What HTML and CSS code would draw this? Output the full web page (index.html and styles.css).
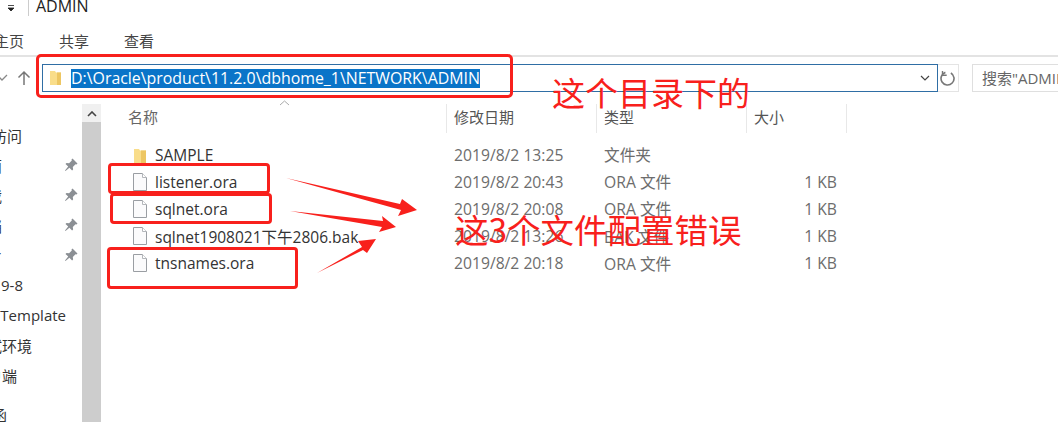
FILE: index.html
```html
<!DOCTYPE html>
<html lang="zh">
<head>
<meta charset="utf-8">
<title>ADMIN</title>
<link rel="stylesheet" href="styles.css">
</head>
<body>
<div class="window">
  <header class="titlebar">
    <svg class="qa-arrow" width="8" height="6" viewBox="0 0 8 6"><path d="M1 0.500h6M1 3h6L4 6z" fill="#222" stroke="#222" stroke-width="0.8"/></svg>
    <span class="title-sep"></span>
    <span class="title">ADMIN</span>
  </header>
  <nav class="tabs">
    <span class="tab tab-home">主页</span>
    <span class="tab">共享</span>
    <span class="tab">查看</span>
  </nav>
  <div class="addressrow">
    <div class="navbtns">
      <svg width="10" height="8" viewBox="0 0 10 8" class="nav-chev"><path d="M-3 1l5 5 5-5" fill="none" stroke="#888" stroke-width="1.3"/></svg>
      <svg width="14" height="16" viewBox="0 0 14 16" class="nav-up"><path d="M7 15V2M1.500 7.500L7 2l5.500 5.500" fill="none" stroke="#777" stroke-width="1.500"/></svg>
    </div>
    <div class="address">
      <svg class="addr-folder" width="13" height="16" viewBox="0 0 13 16"><path d="M1 1h5l1 1.500h5V15H1z" fill="#f9dd8a"/><path d="M8 2.500h4V15H8z" fill="#edc662"/></svg>
      <span class="path">D:\Oracle\product\11.2.0\dbhome_1\NETWORK\ADMIN</span>
      <svg class="addr-chev" width="10" height="6" viewBox="0 0 10 6"><path d="M1 1l4 4 4-4" fill="none" stroke="#444" stroke-width="1.200"/></svg>
    </div>
    <div class="refresh">
      <svg width="16" height="17" viewBox="0 0 16 17"><path d="M4.500 2.800A6.500 6.500 0 1 0 10 2.600" fill="none" stroke="#777" stroke-width="1.600" transform="rotate(8 8 9)"/><path d="M2.500 1v4.200h4.200" fill="none" stroke="#777" stroke-width="1.400"/></svg>
    </div>
    <div class="search">搜索"ADMIN"</div>
  </div>
  <div class="main">
    <aside class="sidebar">
      <ul class="navlist">
        <li class="nav-item"><span class="nav-label">快速访问</span></li>
        <li class="nav-item"><span class="nav-label">桌面</span><svg class="pin" viewBox="0 0 14 14"><use href="#pin"/></svg></li>
        <li class="nav-item"><span class="nav-label">下载</span><svg class="pin" viewBox="0 0 14 14"><use href="#pin"/></svg></li>
        <li class="nav-item"><span class="nav-label">文档</span><svg class="pin" viewBox="0 0 14 14"><use href="#pin"/></svg></li>
        <li class="nav-item"><span class="nav-label">图片</span><svg class="pin" viewBox="0 0 14 14"><use href="#pin"/></svg></li>
        <li class="nav-item"><span class="nav-label">2019-8</span></li>
        <li class="nav-item"><span class="nav-label">Template</span></li>
        <li class="nav-item"><span class="nav-label">测试环境</span></li>
        <li class="nav-item"><span class="nav-label">客户端</span></li>
        <li class="nav-item nav-last"><span class="nav-label">网络函</span></li>
      </ul>
    </aside>
    <div class="scrollbar">
      <svg class="scroll-up" width="10" height="6" viewBox="0 0 10 6"><path d="M1 5l4-4 4 4" fill="none" stroke="#444" stroke-width="1.600"/></svg>
    </div>
    <section class="files">
      <div class="head">
        <svg class="sort" width="11" height="6" viewBox="0 0 11 6"><path d="M1 5l4.500-4L10 5" fill="none" stroke="#aaa" stroke-width="1"/></svg>
        <div class="h h-name">名称</div>
        <div class="h h-date">修改日期</div>
        <div class="h h-type">类型</div>
        <div class="h h-size">大小</div>
      </div>
      <div class="row">
        <div class="c-name"><svg class="ic" width="16" height="18" viewBox="0 0 16 18"><path d="M2 3h5l1 1.500h6V17H2z" fill="#f9dd8a"/><path d="M9 4.500h5V17H9z" fill="#edc662"/></svg>SAMPLE</div>
        <div class="c-date">2019/8/2 13:25</div><div class="c-type">文件夹</div><div class="c-size"></div>
      </div>
      <div class="row">
        <div class="c-name"><svg class="ic" width="16" height="18" viewBox="0 0 16 18"><use href="#doc"/></svg>listener.ora</div>
        <div class="c-date">2019/8/2 20:43</div><div class="c-type">ORA 文件</div><div class="c-size">1 KB</div>
      </div>
      <div class="row">
        <div class="c-name"><svg class="ic" width="16" height="18" viewBox="0 0 16 18"><use href="#doc"/></svg>sqlnet.ora</div>
        <div class="c-date">2019/8/2 20:08</div><div class="c-type">ORA 文件</div><div class="c-size">1 KB</div>
      </div>
      <div class="row">
        <div class="c-name"><svg class="ic" width="16" height="18" viewBox="0 0 16 18"><use href="#doc"/></svg>sqlnet1908021下午2806.bak</div>
        <div class="c-date">2019/8/2 13:26</div><div class="c-type">BAK 文件</div><div class="c-size">1 KB</div>
      </div>
      <div class="row">
        <div class="c-name"><svg class="ic" width="16" height="18" viewBox="0 0 16 18"><use href="#doc"/></svg>tnsnames.ora</div>
        <div class="c-date">2019/8/2 20:18</div><div class="c-type">ORA 文件</div><div class="c-size">1 KB</div>
      </div>
    </section>
  </div>

  <div class="mark mark-addr"></div>
  <div class="mark mark-1"></div>
  <div class="mark mark-2"></div>
  <div class="mark mark-3"></div>
  <div class="note note-dir">这个目录下的</div>
  <div class="note note-err">这3个文件配置错误</div>
  <svg class="arrows" width="1058" height="422" viewBox="0 0 1058 422">
    <path d="M286 178L400 204L402 199L417 210L398 216L401 210z" fill="#f8201c"/>
    <path d="M290 211L383 221L382 216L396 227L379 232L382 227z" fill="#f8201c"/>
    <path d="M317 273L362 247L358 241L376 239L367 253L363 250z" fill="#f8201c"/>
  </svg>
</div>

<svg width="0" height="0" class="defs">
  <defs>
    <symbol id="pin" viewBox="0 0 14 14"><path d="M8.500 0.500l5 5-1 1-1-.3-2.700 2.700.3 2.600-1 1-2.700-2.700L1.500 13 1 12.500l3.200-3.900L1.500 5.900l1-1 2.600.3 2.700-2.700-.3-1z" fill="#8b8f94"/></symbol>
    <symbol id="doc" viewBox="0 0 16 18"><path d="M1.500 0.500h9l4 4v13h-13z" fill="#fbfbfc" stroke="#9a9ea3"/><path d="M10.500 0.500v4h4" fill="#fff" stroke="#b4b7bb"/></symbol>
  </defs>
</svg>
</body>
</html>
```

FILE: styles.css
```css
* { box-sizing: border-box; }
html, body { margin: 0; padding: 0; background: #fff; }
body { width: 1058px; height: 422px; overflow: hidden; font-family: "Liberation Sans", "Noto Sans CJK SC", sans-serif; }
ul { list-style: none; margin: 0; padding: 0; }
.defs { display: block; height: 0; position: absolute; }
.window { position: relative; width: 1058px; height: 422px; overflow: hidden; color: #333; font-family: "Open Sans", "Noto Sans CJK SC", sans-serif; display: flex; flex-direction: column; }

.titlebar { flex: none; display: flex; align-items: flex-start; margin-top: -6px; padding-left: 7px; height: 22px; }
.qa-arrow { margin-top: 11px; flex: none; }
.title-sep { width: 1px; height: 16px; background: #ccc; margin: 6px 7px 0 13px; }
.title { font-size: 16px; line-height: 25px; color: #222; }

.tabs { flex: none; height: 41px; padding-top: 15px; display: flex; border-bottom: 2px solid #e3e3e3; font-size: 15px; color: #444; line-height: 20px; }
.tab { width: 65px; }
.tab-home { width: 65px; margin-left: -6px; }
.tab:nth-child(3) { width: auto; }

.addressrow { flex: none; height: 47px; padding-top: 7px; display: flex; align-items: flex-start; }
.navbtns { width: 42px; height: 28px; display: flex; align-items: center; flex: none; }
.nav-up { margin-left: 7px; }
.address { width: 896px; height: 28px; border: 1px solid #2f6ea5; display: flex; align-items: center; padding-left: 6px; flex: none; }
.addr-folder { flex: none; margin-right: 9px; }
.path { background: #0a74c8; color: #fff; font-size: 15.900px; line-height: 19px; white-space: nowrap; }
.addr-chev { margin-left: auto; margin-right: 7px; flex: none; }
.refresh { width: 21px; height: 28px; border: 1px solid #e4e4e4; border-left: 0; display: flex; align-items: center; justify-content: center; flex: none; }
.search { margin-left: 13px; height: 28px; flex: 1; border: 1px solid #dfdfdf; border-right: 0; padding-left: 9px; font-size: 15px; line-height: 26px; color: #666; white-space: nowrap; overflow: hidden; }

.main { display: flex; flex: 1; min-height: 0; }
.sidebar { width: 82px; overflow: hidden; flex: none; }
.navlist { padding-top: 16px; }
.nav-item { height: 30px; display: flex; align-items: center; position: relative; font-size: 15px; color: #333; }
.nav-last { margin-top: 9px; }
.nav-label { position: absolute; right: 16px; white-space: nowrap; }
.nav-item:nth-child(1) .nav-label { right: 60px; }
.nav-item:nth-child(2) .nav-label,
.nav-item:nth-child(3) .nav-label,
.nav-item:nth-child(4) .nav-label,
.nav-item:nth-child(5) .nav-label { right: 80px; }
.nav-item:nth-child(6) .nav-label { right: 59px; }
.nav-item:nth-child(7) .nav-label { right: 16px; }
.nav-item:nth-child(8) .nav-label { right: 50px; }
.nav-item:nth-child(9) .nav-label { right: 65px; }
.nav-item:nth-child(10) .nav-label { right: 75px; }
.pin { position: absolute; left: 64px; top: 8px; width: 14px; height: 14px; }

.scrollbar { width: 19px; background: #cdcdcd; flex: none; position: relative; }
.scrollbar::before { content: ""; display: block; height: 18px; background: #f0f0f0; }
.scroll-up { position: absolute; left: 5px; top: 7px; }

.files { flex: 1; padding-left: 6px; }
.head { display: flex; height: 28px; position: relative; font-size: 15px; line-height: 26px; color: #555; }
.sort { position: absolute; left: 172px; top: -4px; }
.h { border-right: 1px solid #e8e8e8; padding-left: 7px; height: 29px; }
.h-name { width: 340px; padding-left: 21px; color: #666; }
.h-date { width: 150px; }
.h-type { width: 150px; }
.h-size { width: 100px; }

.row { display: flex; height: 27.200px; align-items: center; font-size: 15.700px; color: #6d6d6d; white-space: nowrap; }
.head + .row { margin-top: 9px; }
.c-name { width: 340px; color: #333; display: flex; align-items: center; padding-left: 25px; font-size: 15.500px; }
.ic { flex: none; margin-right: 7px; }
.c-date { width: 150px; padding-left: 7px; }
.c-type { width: 150px; padding-left: 7px; }
.c-size { width: 97px; text-align: right; padding-right: 7px; }

.mark { position: absolute; border: 3px solid #f8201c; border-radius: 4px; }
.mark-addr { left: 36px; top: 54px; width: 477px; height: 44px; border-radius: 5px; }
.mark-1 { left: 108px; top: 163px; width: 162px; height: 31px; }
.mark-2 { left: 110px; top: 193px; width: 162px; height: 31px; }
.mark-3 { left: 107px; top: 247px; width: 191px; height: 42px; }
.note { position: absolute; color: #f8201c; line-height: 36px; white-space: nowrap; font-family: "Noto Sans CJK SC", sans-serif; }
.note-dir { left: 552px; top: 74px; font-size: 33px; }
.note-err { left: 455px; top: 211px; font-size: 33.500px; }
.arrows { position: absolute; left: 0; top: 0; pointer-events: none; }
```
